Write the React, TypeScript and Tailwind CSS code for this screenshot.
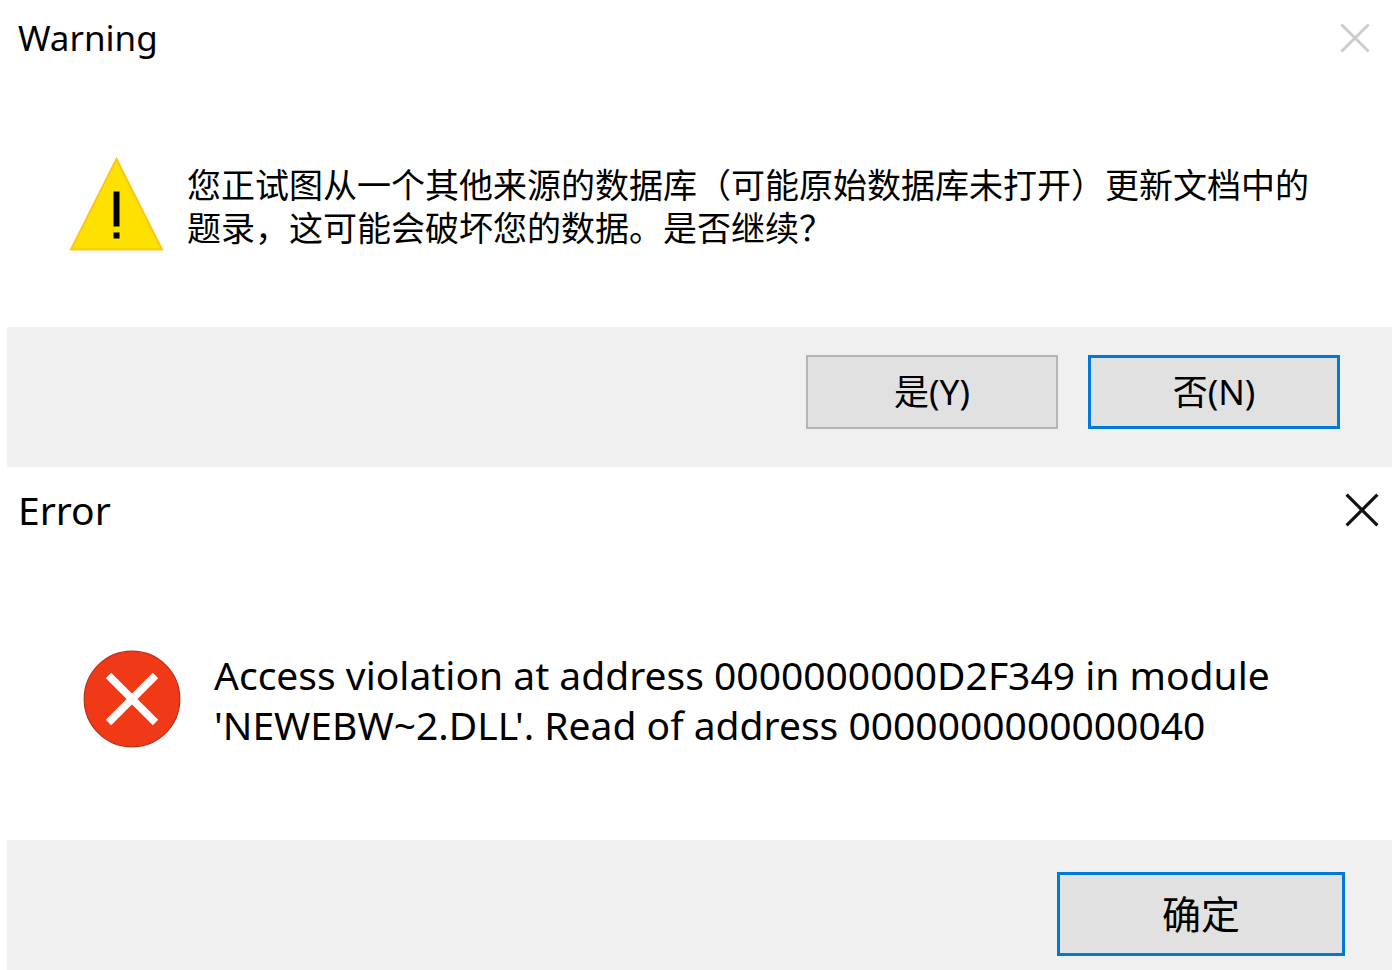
import React from "react";

const uiFont = "font-['Noto_Sans','Noto_Sans_CJK_SC',sans-serif]";

function CloseIcon({ className }: { className: string }) {
  return (
    <svg viewBox="0 0 32 32" className={className} fill="none" stroke="currentColor" aria-hidden="true">
      <path d="M1.500 1.500 30.500 30.500M30.500 1.500 1.500 30.500" />
    </svg>
  );
}

function WarningIcon() {
  return (
    <svg width="94" height="94" viewBox="0 0 94 94" className="shrink-0" aria-hidden="true">
      <path d="M47.500 2 93 92.500H2Z" fill="#fde100" stroke="#ffc414" strokeWidth="2" />
      <path d="M44.500 34.500h6v35h-6zM44.500 75.500h6v6h-6z" fill="#000" />
    </svg>
  );
}

function ErrorIcon() {
  return (
    <svg width="98" height="98" viewBox="0 0 98 98" className="shrink-0" aria-hidden="true">
      <circle cx="49" cy="49" r="47.800" fill="#f03a17" stroke="#b82d18" strokeWidth="1.200" />
      <path d="M25.500 25.500 72.500 72.500M72.500 25.500 25.500 72.500" stroke="#fff" strokeWidth="7.500" fill="none" />
    </svg>
  );
}

export default function App() {
  return (
    <main className={`min-h-screen bg-white text-black ${uiFont}`}>
      <section role="alertdialog" aria-labelledby="warning-title" aria-describedby="warning-text">
        <header className="flex h-[76px] items-center justify-between pr-[22px] pl-[18px]">
          <h1 id="warning-title" className="text-[35px]">Warning</h1>
          <button type="button" aria-label="Close warning" className="text-[#cccccc]">
            <CloseIcon className="size-[30px] stroke-3" />
          </button>
        </header>
        <div className="flex items-start gap-6 pt-[81px] pr-12 pb-[76px] pl-[69px]">
          <WarningIcon />
          <p id="warning-text" className="pt-2 font-['Liberation_Sans','Noto_Sans_CJK_SC',sans-serif] text-[34px] leading-[43px]">
            您正试图从一个其他来源的数据库（可能原始数据库未打开）更新文档中的<br />题录，这可能会破坏您的数据。是否继续？
          </p>
        </div>
        <footer className="ml-[7px] flex h-[140px] items-start justify-end gap-[30px] bg-[#f0f0f0] pt-7 pr-[52px]">
          <button type="button" className="h-[74px] w-[252px] border-2 border-[#b5b5b5] bg-[#e1e1e1] text-[35px]">是(Y)</button>
          <button type="button" className="h-[74px] w-[252px] border-3 border-[#0078d7] bg-[#e1e1e1] text-[35px]">否(N)</button>
        </footer>
      </section>
      <section role="alertdialog" aria-labelledby="error-title" aria-describedby="error-text">
        <header className="flex h-[86px] items-center justify-between pr-[13px] pl-[18px]">
          <h1 id="error-title" className="text-[39px]">Error</h1>
          <button type="button" aria-label="Close error" className="text-[#111111]">
            <CloseIcon className="size-[34px] stroke-3" />
          </button>
        </header>
        <div className="flex items-start gap-[33px] pt-[97px] pb-[90px] pl-[83px]">
          <ErrorIcon />
          <p id="error-text" className="text-[39px] leading-[50px]">
            Access violation at address 0000000000D2F349 in module<br />'NEWEBW~2.DLL'. Read of address 0000000000000040
          </p>
        </div>
        <footer className="ml-[7px] flex h-[130px] items-start justify-end bg-[#f0f0f0] pt-8 pr-[47px]">
          <button type="button" className="h-[84px] w-[288px] border-3 border-[#0078d7] bg-[#e1e1e1] text-[39px]">确定</button>
        </footer>
      </section>
    </main>
  );
}
